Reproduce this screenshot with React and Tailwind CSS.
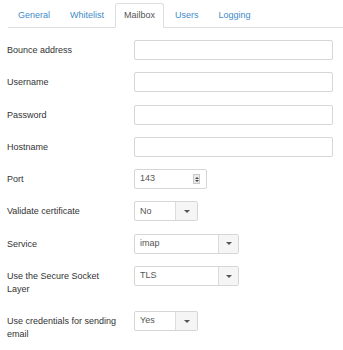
import React from "react";

const Caret = () => (
  <span className="block w-0 h-0 border-l-[3px] border-r-[3px] border-t-[3px] border-l-transparent border-r-transparent border-t-[#555]" />
);

function TextInput() {
  return <div className="w-[199px] h-[20px] border border-[#d6d6d6] rounded-[2px] bg-white" />;
}

function PortInput() {
  return (
    <div className="w-[73px] h-[20px] border border-[#d6d6d6] rounded-[2px] bg-white flex items-center pl-[5px] pr-[6px] text-[#555]">
      <span className="flex-1">143</span>
      <span className="w-[7px] h-[10px] border border-[#c8c8c8] bg-[#ececec] flex flex-col items-center justify-around py-[1px]">
        <span className="block w-0 h-0 border-l-[2px] border-r-[2px] border-b-[2px] border-l-transparent border-r-transparent border-b-[#444]" />
        <span className="block w-0 h-0 border-l-[2px] border-r-[2px] border-t-[2px] border-l-transparent border-r-transparent border-t-[#444]" />
      </span>
    </div>
  );
}

function Select({ value, wide }) {
  return (
    <div
      className={
        (wide ? "w-[105px]" : "w-[64px]") +
        " h-[20px] border border-[#d6d6d6] rounded-[2px] bg-white flex text-[#555]"
      }
    >
      <span className="flex-1 flex items-center pl-[5px]">{value}</span>
      <span
        className={
          (wide ? "w-[20px]" : "w-[22px]") +
          " border-l border-[#dcdcdc] bg-[#f5f5f5] flex items-center justify-center rounded-r-[2px]"
        }
      >
        <Caret />
      </span>
    </div>
  );
}

function Row({ label, children, mb = "mb-[12.3px]" }) {
  return (
    <div className={"flex items-start " + mb}>
      <div className="w-[127px] pr-[10px] pt-[4px] leading-[13px] text-[#333]">{label}</div>
      <div>{children}</div>
    </div>
  );
}

export default function App() {
  const tabs = ["General", "Whitelist", "Mailbox", "Users", "Logging"];
  return (
    <div className="w-[343px] h-[350px] bg-white overflow-hidden text-[9px] font-['Liberation_Sans',Arial,sans-serif]">
      <div className="pt-[3px] pl-[8px]">
        <div className="flex border-b border-[#ddd] pl-[1px]">
          {tabs.map((t) => (
            <div
              key={t}
              className={
                "h-[25px] -mb-px mr-[2px] px-[8px] flex items-center border rounded-t-[3px] " +
                (t === "Mailbox"
                  ? "border-[#ddd] border-b-white bg-white text-[#555]"
                  : "border-transparent text-[#428bca]")
              }
            >
              {t}
            </div>
          ))}
        </div>
      </div>
      <div className="mt-[12px] pl-[7px]">
        <Row label="Bounce address"><TextInput /></Row>
        <Row label="Username"><TextInput /></Row>
        <Row label="Password"><TextInput /></Row>
        <Row label="Hostname"><TextInput /></Row>
        <Row label="Port"><PortInput /></Row>
        <Row label="Validate certificate"><Select value="No" /></Row>
        <Row label="Service"><Select value="imap" wide /></Row>
        <Row label="Use the Secure Socket Layer" mb="mb-[15px]"><Select value="TLS" wide /></Row>
        <Row label="Use credentials for sending email"><Select value="Yes" /></Row>
      </div>
    </div>
  );
}
